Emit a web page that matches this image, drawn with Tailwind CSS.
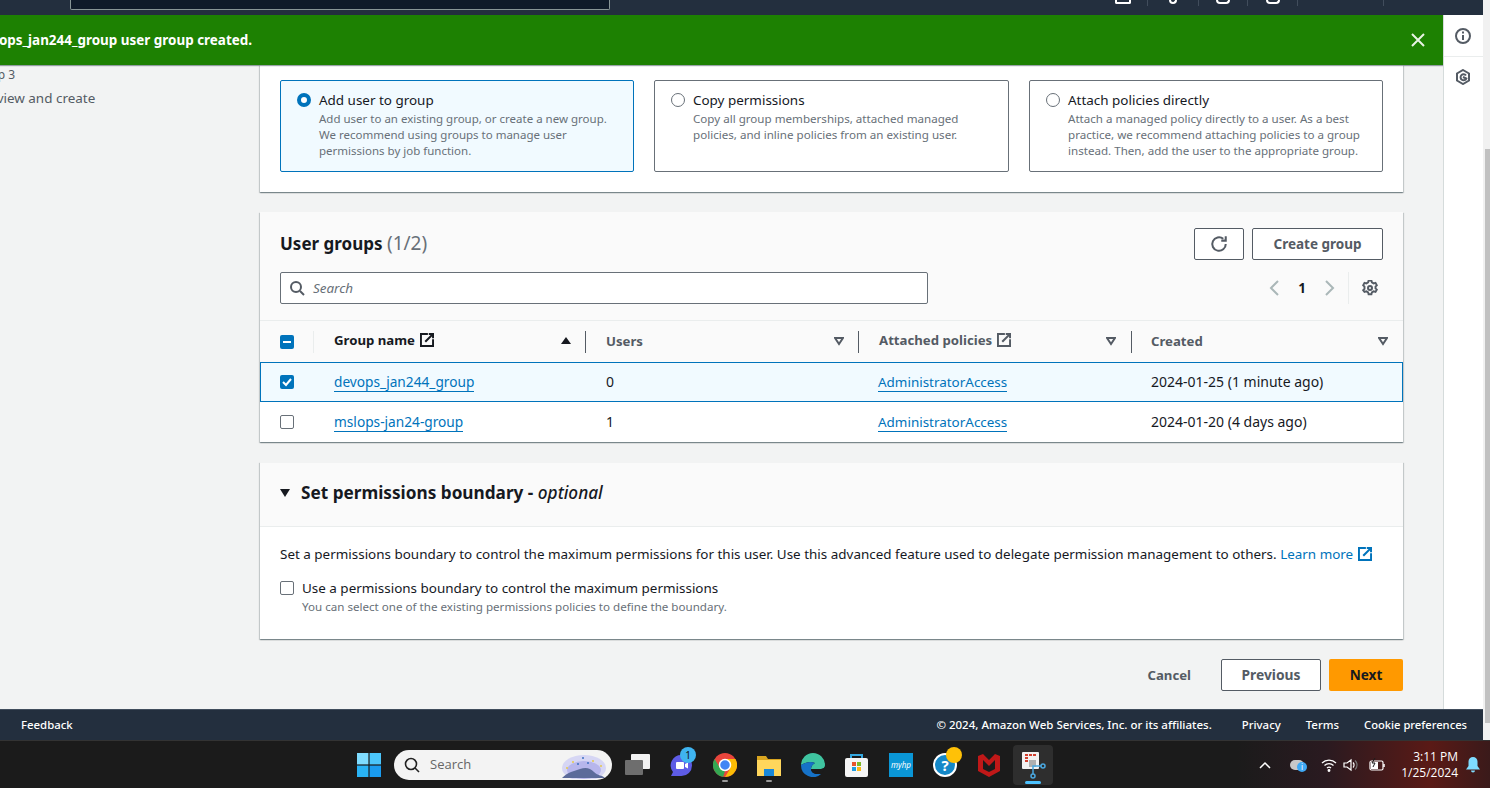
<!DOCTYPE html>
<html lang="en">
<head>
    <meta charset="UTF-8">
    <title>Add user to group</title>
    <script src="https://cdn.jsdelivr.net/npm/@tailwindcss/browser@4"></script>
</head>
<body class="font-['Noto_Sans',sans-serif] text-[13.45px] leading-5 text-[#16191f] bg-white overflow-hidden">
<div class="w-[1490px] h-[788px] flex flex-col overflow-hidden">
    <div class="flex h-[740px]">
        <div class="w-[1483px] flex flex-col">
            <!-- top nav, mostly scrolled off -->
            <div class="h-[15px] bg-[#232f3e] flex items-start shrink-0 overflow-hidden">
                <div class="ml-[70px] w-[540px] h-[10px] bg-[#0f1b2a] border border-t-0 border-[#879596] rounded-b-[2px] shrink-0"></div>
                <div class="ml-[503px] flex items-start">
                    <div class="w-[34px] h-[6px] pl-[2px]"><div class="w-4 h-[4px] border-2 border-t-0 border-white rounded-b-[2px]"></div></div>
                    <div class="w-[51px] h-[6px] border-l border-[#414d5c] flex justify-center"><div class="w-[8px] h-[4px] border-2 border-t-0 border-white rounded-b-full"></div></div>
                    <div class="w-[49px] h-[6px] border-l border-[#414d5c] flex justify-center"><div class="w-[14px] h-[4px] border-2 border-t-0 border-white rounded-b-full"></div></div>
                    <div class="w-[50px] h-[6px] border-l border-[#414d5c] flex justify-center"><div class="w-[14px] h-[4px] border-2 border-t-0 border-white rounded-b-[5px]"></div></div>
                    <div class="w-[86px] h-[6px] border-l border-[#414d5c]"></div>
                    <div class="w-[100px] h-[6px] border-l border-[#414d5c]"></div>
                </div>
            </div>

            <div class="flex h-[694px] shrink-0">
                <div class="w-[1443px] flex flex-col bg-[#f2f3f3] overflow-hidden">
                    <!-- flash message -->
                    <div class="h-[50px] shrink-0 bg-[#1d8102] flex items-center justify-between pr-[17px] shadow-[0_1px_1px_rgba(0,28,36,0.4)] relative z-10">
                        <span class="text-white font-bold -ml-[25px]">devops_jan244_group user group created.</span>
                        <svg class="w-4 h-4" viewBox="0 0 16 16" fill="none" stroke="#e8f3e4" stroke-width="2"><path d="M2 2l12 12M14 2L2 14"/></svg>
                    </div>

                    <div class="flex flex-1">
                        <!-- wizard steps, cut off at the left -->
                        <div class="w-[260px] shrink-0 text-[#545b64]">
                            <div class="text-[12px] leading-4 mt-[2px] -ml-[20px]">Step 3</div>
                            <div class="mt-[5px] -ml-[19px]">Review and create</div>
                        </div>

                        <div class="w-[1143px] shrink-0 flex flex-col">
                            <!-- permission options -->
                            <div class="bg-white h-[127px] shrink-0 shadow-[0_1px_1px_0_rgba(0,28,36,0.3),1px_1px_1px_0_rgba(0,28,36,0.15),-1px_1px_1px_0_rgba(0,28,36,0.15)] px-5 pt-[15px] grid grid-cols-[354px_355px_354px] gap-x-5 items-start">
                                <div class="h-[92px] bg-[#f1faff] border border-[#0073bb] rounded-[2px] pl-4 pt-[9px] flex">
                                    <div class="w-[14px] h-[14px] mt-[3px] rounded-full border-[4px] border-[#0073bb] bg-white shrink-0"></div>
                                    <div class="ml-2">
                                        <div>Add user to group</div>
                                        <div class="mt-[1px] text-[11.5px] leading-4 text-[#687078] w-[300px]">Add user to an existing group, or create a new group. We recommend using groups to manage user permissions by job function.</div>
                                    </div>
                                </div>
                                <div class="h-[92px] border border-[#687078] rounded-[2px] pl-4 pt-[9px] flex">
                                    <div class="w-[14px] h-[14px] mt-[3px] rounded-full border border-[#687078] bg-white shrink-0"></div>
                                    <div class="ml-2">
                                        <div>Copy permissions</div>
                                        <div class="mt-[1px] text-[11.6px] leading-4 text-[#687078] w-[290px]">Copy all group memberships, attached managed policies, and inline policies from an existing user.</div>
                                    </div>
                                </div>
                                <div class="h-[92px] border border-[#687078] rounded-[2px] pl-4 pt-[9px] flex">
                                    <div class="w-[14px] h-[14px] mt-[3px] rounded-full border border-[#687078] bg-white shrink-0"></div>
                                    <div class="ml-2">
                                        <div>Attach policies directly</div>
                                        <div class="mt-[1px] text-[11.6px] leading-4 text-[#687078] w-[300px]">Attach a managed policy directly to a user. As a best practice, we recommend attaching policies to a group instead. Then, add the user to the appropriate group.</div>
                                    </div>
                                </div>
                            </div>

                            <!-- user groups table -->
                            <div class="mt-5 h-[230px] shrink-0 bg-white shadow-[0_1px_1px_0_rgba(0,28,36,0.3),1px_1px_1px_0_rgba(0,28,36,0.15),-1px_1px_1px_0_rgba(0,28,36,0.15)]">
                                <div class="h-[108px] bg-[#fafafa] px-5 pt-4 relative">
                                    <div class="flex justify-between items-start h-[32px]">
                                        <div class="text-[17px] leading-[30px] font-bold">User groups <span class="font-normal text-[19px] text-[#687078]">(1/2)</span></div>
                                        <div class="flex gap-2">
                                            <button class="w-[50px] h-8 border border-[#545b64] rounded-[2px] bg-white flex items-center justify-center">
                                                <svg class="w-[18px] h-[18px]" viewBox="0 0 16 16" fill="none" stroke="#545b64" stroke-width="1.800"><path d="M14 8a6 6 0 1 1-2.200-4.600"/><path d="M14 1v4h-4"/></svg>
                                            </button>
                                            <button class="w-[131px] h-8 border border-[#545b64] rounded-[2px] bg-white text-[#545b64] text-[13.5px] font-bold">Create group</button>
                                        </div>
                                    </div>
                                    <div class="mt-3 flex justify-between items-center">
                                        <div class="w-[648px] h-8 border border-[#687078] rounded-[2px] bg-white flex items-center pl-2">
                                            <svg class="w-4 h-4" viewBox="0 0 16 16" fill="none" stroke="#545b64" stroke-width="2"><circle cx="7" cy="7" r="5"/><path d="M11 11l4 4"/></svg>
                                            <span class="ml-2 italic text-[#687078]">Search</span>
                                        </div>
                                        <div class="flex items-center h-8">
                                            <svg class="w-4 h-4" viewBox="0 0 16 16" fill="none" stroke="#aab7b8" stroke-width="2"><path d="M11 1L4 8l7 7"/></svg>
                                            <span class="ml-[15px] font-bold">1</span>
                                            <svg class="w-4 h-4 ml-[15px]" viewBox="0 0 16 16" fill="none" stroke="#aab7b8" stroke-width="2"><path d="M5 1l7 7-7 7"/></svg>
                                            <div class="w-px h-8 bg-[#eaeded] ml-[11px]"></div>
                                            <svg class="w-4 h-4 ml-[13px] mr-[5px]" viewBox="0 0 16 16" fill="none" stroke="#545b64" stroke-width="2"><path d="M6.500 1.200h3l.5 2 1.800 1 2-.6 1.400 2.600-1.400 1.400v1.800l1.400 1.400-1.400 2.400-2-.6-1.800 1-.5 2h-3l-.5-2-1.800-1-2 .6L.8 11.300l1.400-1.400V7.600L.8 6.200l1.400-2.600 2 .6 1.800-1z" transform="translate(0.4 -0.6) scale(0.95)"/><circle cx="8" cy="8" r="2"/></svg>
                                        </div>
                                    </div>
                                </div>
                                <div class="h-[42px] bg-[#fafafa] border-t border-[#eaeded] grid grid-cols-[53px_272px_273px_273px_272px] items-center font-bold text-[13.2px] text-[#545b64]">
                                    <div class="pl-5">
                                        <div class="w-[14px] h-[14px] rounded-[2px] bg-[#0073bb] flex items-center justify-center"><div class="w-2 h-[2px] bg-white"></div></div>
                                    </div>
                                    <div class="h-[22px] border-l border-[#eaeded] pl-5 pr-[14px] flex items-center justify-between text-[#16191f]">
                                        <span class="flex items-center gap-[5px] -mt-[4px]">Group name
                                            <svg class="w-[14px] h-[14px]" viewBox="0 0 16 16" fill="none" stroke="#16191f" stroke-width="2.400"><path d="M9 1H1v14h14V7"/><path d="M6 10l9-9M10 1h5v5"/></svg>
                                        </span>
                                        <svg class="w-[10px] h-[10px] -mt-[2px]" viewBox="0 0 10 10" fill="#16191f"><path d="M5 1l5 7H0z"/></svg>
                                    </div>
                                    <div class="h-[22px] border-l border-[#545b64] pl-5 pr-[14px] flex items-center justify-between">
                                        <span class="-mt-[2px]">Users</span>
                                        <svg class="w-[10px] h-[10px] -mt-[2px]" viewBox="0 0 10 10" fill="none" stroke="#545b64" stroke-width="2"><path d="M1 2h8L5 8z"/></svg>
                                    </div>
                                    <div class="h-[22px] border-l border-[#545b64] pl-5 pr-[15px] flex items-center justify-between">
                                        <span class="flex items-center gap-[5px] -mt-[4px]">Attached policies
                                            <svg class="w-[14px] h-[14px]" viewBox="0 0 16 16" fill="none" stroke="#545b64" stroke-width="2.400"><path d="M9 1H1v14h14V7"/><path d="M6 10l9-9M10 1h5v5"/></svg>
                                        </span>
                                        <svg class="w-[10px] h-[10px] -mt-[2px]" viewBox="0 0 10 10" fill="none" stroke="#545b64" stroke-width="2"><path d="M1 2h8L5 8z"/></svg>
                                    </div>
                                    <div class="h-[22px] border-l border-[#545b64] pl-[19px] pr-[15px] flex items-center justify-between">
                                        <span class="-mt-[2px]">Created</span>
                                        <svg class="w-[10px] h-[10px] -mt-[2px]" viewBox="0 0 10 10" fill="none" stroke="#545b64" stroke-width="2"><path d="M1 2h8L5 8z"/></svg>
                                    </div>
                                </div>
                                <div class="h-10 bg-[#f1faff] border border-[#0073bb] grid grid-cols-[52px_272px_273px_273px_271px] items-center">
                                    <div class="pl-[19px]">
                                        <div class="w-[14px] h-[14px] rounded-[2px] bg-[#0073bb] flex items-center justify-center">
                                            <svg class="w-[10px] h-[10px]" viewBox="0 0 10 10" fill="none" stroke="white" stroke-width="2"><path d="M1 5l3 3 5-6"/></svg>
                                        </div>
                                    </div>
                                    <div class="pl-[21px]"><a class="text-[#0073bb] text-[13.7px] border-b border-[#0073bb]">devops_jan244_group</a></div>
                                    <div class="pl-[21px] text-[14px]">0</div>
                                    <div class="pl-5"><a class="text-[#0073bb] border-b border-[#0073bb]">AdministratorAccess</a></div>
                                    <div class="pl-5 text-[14px]">2024-01-25 (1 minute ago)</div>
                                </div>
                                <div class="h-10 grid grid-cols-[53px_272px_273px_273px_272px] items-center">
                                    <div class="pl-5">
                                        <div class="w-[14px] h-[14px] rounded-[2px] border border-[#687078] bg-white"></div>
                                    </div>
                                    <div class="pl-[21px]"><a class="text-[#0073bb] text-[13.7px] border-b border-[#0073bb]">mslops-jan24-group</a></div>
                                    <div class="pl-[21px] text-[14px]">1</div>
                                    <div class="pl-5"><a class="text-[#0073bb] border-b border-[#0073bb]">AdministratorAccess</a></div>
                                    <div class="pl-5 text-[14px]">2024-01-20 (4 days ago)</div>
                                </div>
                            </div>

                            <!-- permissions boundary -->
                            <div class="mt-5 h-[177px] shrink-0 bg-white shadow-[0_1px_1px_0_rgba(0,28,36,0.3),1px_1px_1px_0_rgba(0,28,36,0.15),-1px_1px_1px_0_rgba(0,28,36,0.15)]">
                                <div class="h-[65px] bg-[#fafafa] border-y border-[#eaeded] border-t-[#f2f3f3] flex items-center pl-5 pb-[3px]">
                                    <svg class="w-[10px] h-[10px]" viewBox="0 0 10 10" fill="#16191f"><path d="M0 1h10L5 9z"/></svg>
                                    <span class="ml-[11px] text-[17.2px] font-bold">Set permissions boundary - <em class="font-medium italic">optional</em></span>
                                </div>
                                <div class="px-5 pt-[17px]">
                                    <div>Set a permissions boundary to control the maximum permissions for this user. Use this advanced feature used to delegate permission management to others. <a class="text-[#0073bb]">Learn more</a>
                                        <svg class="inline w-[14px] h-[14px] ml-[1px] align-[-2px]" viewBox="0 0 16 16" fill="none" stroke="#0073bb" stroke-width="2.400"><path d="M9 1H1v14h14V7"/><path d="M6 10l9-9M10 1h5v5"/></svg>
                                    </div>
                                    <div class="mt-[14px] flex">
                                        <div class="w-[14px] h-[14px] mt-[3px] rounded-[2px] border border-[#687078] shrink-0"></div>
                                        <div class="ml-2">
                                            <div>Use a permissions boundary to control the maximum permissions</div>
                                            <div class="mt-[1px] text-[11.6px] leading-4 text-[#687078]">You can select one of the existing permissions policies to define the boundary.</div>
                                        </div>
                                    </div>
                                </div>
                            </div>

                            <!-- wizard actions -->
                            <div class="mt-5 flex justify-end items-center font-bold">
                                <span class="text-[#545b64] text-[13.2px]">Cancel</span>
                                <button class="ml-[30px] w-[100px] h-8 border border-[#545b64] rounded-[2px] bg-white text-[#545b64] text-[13.8px] font-bold">Previous</button>
                                <button class="ml-2 w-[74px] h-8 rounded-[2px] bg-[#ff9900] text-[#16191f] text-[13.6px] font-bold">Next</button>
                            </div>
                        </div>
                    </div>
                </div>

                <!-- right tool rail -->
                <div class="w-10 shrink-0 bg-white border-l border-[#d5dbdb] flex flex-col items-center">
                    <div class="h-[42px] w-full border-b border-[#eaeded] flex items-center justify-center pr-[1px]">
                        <svg class="w-4 h-4" viewBox="0 0 16 16" fill="none" stroke="#545b64" stroke-width="2"><circle cx="8" cy="8" r="7"/><path d="M8 7v5M8 3.500v2"/></svg>
                    </div>
                    <svg class="w-4 h-4 mt-3 mr-[1px]" viewBox="0 0 16 16" fill="none" stroke="#545b64" stroke-width="2"><path d="M8 1l6 3.500v7L8 15l-6-3.500v-7z"/><path d="M11 6.500a3 3 0 1 0 .3 3L8 8"/></svg>
                </div>
            </div>

            <!-- console footer -->
            <div class="h-[31px] shrink-0 bg-[#232f3e] border-t border-[#414d5c] flex items-center text-white text-[11.4px] font-medium pl-[21px] pr-[16px]">
                <span>Feedback</span>
                <span class="ml-auto text-[11.5px]">© 2024, Amazon Web Services, Inc. or its affiliates.</span>
                <span class="ml-[30px]">Privacy</span>
                <span class="ml-[25px]">Terms</span>
                <span class="ml-[25px] text-[11.2px]">Cookie preferences</span>
            </div>
        </div>

        <!-- browser scrollbar -->
        <div class="w-[7px] shrink-0 bg-[#f1f1f1] pl-[2px] flex flex-col">
            <div class="h-[149px] shrink-0"></div>
            <div class="h-[574px] shrink-0 bg-[#c1c1c1]"></div>
        </div>
    </div>

    <!-- windows taskbar -->
    <div class="h-[48px] shrink-0 bg-[linear-gradient(90deg,#1b1b1b_0%,#1b1b1b_83%,#2a1a20_89%,#5a1a16_96%,#3a1a1a_100%)] border-t border-[#333] flex items-center text-white">
        <svg class="ml-[357px] w-[24px] h-[24px] shrink-0" viewBox="0 0 24 24"><path d="M0 0h11.400v11.400H0z" fill="#7fdcff"/><path d="M12.600 0H24v11.400H12.600z" fill="#4cc6fb"/><path d="M0 12.600h11.400V24H0z" fill="#29b3f5"/><path d="M12.600 12.600H24V24H12.600z" fill="#1a9cf0"/></svg>
        <div class="ml-[13px] w-[218px] h-[30px] rounded-full bg-[#f3f3f3] flex items-center pl-[10px] shrink-0 overflow-hidden relative">
            <svg class="w-[16px] h-[16px]" viewBox="0 0 16 16" fill="none" stroke="#222" stroke-width="1.600"><circle cx="7" cy="7" r="5.500"/><path d="M11 11l4 4"/></svg>
            <span class="ml-[10px] -mt-[2px] text-[13px] text-[#666] font-['Open_Sans',sans-serif]">Search</span>
            <svg class="absolute right-[5px] top-[3px] w-[46px] h-[26px]" viewBox="0 0 46 26"><ellipse cx="23" cy="15" rx="22" ry="13" fill="#d6d6f4"/><ellipse cx="23" cy="17" rx="17" ry="9" fill="#b7b6ec"/><path d="M1 25c6-6 12-7 18-9s10-1 14 3 8 3 11 6z" fill="#5c6b9a"/><circle cx="6" cy="15" r="1" fill="#e6c84a"/><circle cx="12" cy="9" r="1" fill="#e6c84a"/><circle cx="17" cy="11" r="1" fill="#3d6fc2"/><circle cx="22" cy="5" r="1" fill="#3d6fc2"/><circle cx="27" cy="10" r="1" fill="#3d6fc2"/><circle cx="32" cy="8" r="1" fill="#e6c84a"/><circle cx="40" cy="13" r="1" fill="#e6c84a"/></svg>
        </div>
        <svg class="ml-[13px] w-[25px] h-[21px] shrink-0" viewBox="0 0 25 21"><rect x="6" y="0" width="19" height="15" rx="1" fill="#f2f2f2"/><rect x="0" y="6" width="18" height="15" rx="1" fill="#6e6e6e"/></svg>
        <div class="ml-[20px] w-[23px] h-[24px] relative shrink-0">
            <svg class="w-[23px] h-[24px]" viewBox="0 0 23 24"><path d="M11.500 2a10.500 10.500 0 1 1 0 21H1l2-4A10.500 10.500 0 0 1 11.500 2z" fill="#5e5ce6"/><rect x="6" y="9" width="8" height="7" rx="1" fill="#fff"/><path d="M15 11l3-1.500v6L15 14z" fill="#fff"/></svg>
            <div class="absolute -top-[6px] left-[10px] w-4 h-4 rounded-full bg-[#3fb4f0] text-[10px] leading-4 text-center text-[#111]">1</div>
        </div>
        <div class="ml-[20px] w-6 h-6 relative shrink-0">
            <svg class="w-6 h-6" viewBox="0 0 24 24"><circle cx="12" cy="12" r="12" fill="#e8453c"/><path d="M12 24A12 12 0 0 1 1.600 6L7 15l5 3-2 6z" fill="#34a853"/><path d="M12 6h10.400A12 12 0 0 1 12 24l5-8z" fill="#fbbc05"/><circle cx="12" cy="12" r="5.500" fill="#4285f4" stroke="#fff" stroke-width="1.500"/></svg>
            <div class="absolute -bottom-[5px] left-[9px] w-[6px] h-[2px] rounded-full bg-[#9a9a9a]"></div>
        </div>
        <div class="ml-[20px] w-6 h-6 relative shrink-0">
            <svg class="w-6 h-6" viewBox="0 0 24 24"><path d="M0 3h9l2 3h13v4H0z" fill="#d9a520"/><path d="M0 7h24v16H0z" fill="#ffd65c"/><path d="M7 16h10v7H7z" fill="#1a88d8"/></svg>
            <div class="absolute -bottom-[5px] left-[9px] w-[6px] h-[2px] rounded-full bg-[#9a9a9a]"></div>
        </div>
        <svg class="ml-[20px] w-6 h-6 shrink-0" viewBox="0 0 24 24"><path d="M0 12A12 12 0 0 1 24 12c0 3-2 4-5 4H10c0-3 2-5 4-6-6-3-12 1-14 2z" fill="#3fc4a0"/><path d="M0 12c2-1 8-5 14-2-2 1-4 3-4 6 0 3 3 5 7 5h3a12 12 0 0 1-20-9z" fill="#1672c8"/><path d="M24 12c0 3-2 4-5 4h-9c0 3 3 5 7 5h3a12 12 0 0 0 4-9z" fill="#1b1b1b"/></svg>
        <svg class="ml-[20px] w-[23px] h-[24px] shrink-0" viewBox="0 0 23 24"><path d="M6 6V2h11v4" fill="none" stroke="#35a8e0" stroke-width="2"/><rect x="0" y="5" width="23" height="19" rx="2" fill="#f5f5f5"/><rect x="7" y="9" width="4" height="4" fill="#e8532b"/><rect x="12" y="9" width="4" height="4" fill="#7db928"/><rect x="7" y="14" width="4" height="4" fill="#1f9be0"/><rect x="12" y="14" width="4" height="4" fill="#fdb813"/></svg>
        <div class="ml-[21px] w-[24px] h-[24px] bg-[#0a96d6] flex items-center justify-center shrink-0 text-[8px] italic text-white">myhp</div>
        <div class="ml-[20px] w-6 h-6 relative shrink-0">
            <div class="w-6 h-6 rounded-full bg-[#1488c8] border-2 border-white text-center text-[15px] leading-5 font-bold text-white">?</div>
            <div class="absolute -top-[6px] left-[13px] w-4 h-4 rounded-full bg-[#ffc107]"></div>
        </div>
        <svg class="ml-[21px] w-[22px] h-[24px] shrink-0" viewBox="0 0 22 24"><path d="M0 3l5-2 6 6 6-6 5 2v15l-11 6L0 18z" fill="#c01818"/><path d="M5 7l6 6 6-6v9l-6 3-6-3z" fill="#1b1b1b"/></svg>
        <div class="ml-[13px] w-[40px] h-[40px] bg-[#2e2e2e] rounded-[4px] flex items-center justify-center relative shrink-0">
            <svg class="w-[26px] h-[28px]" viewBox="0 0 26 28"><rect x="2" y="1" width="17" height="17" rx="1" fill="#f2f2f2"/><path d="M5 3h3v2H5zM9 3h3v2H9zM13 3h3v2h-3zM5 6h3v2H5zM5 9h3v2H5z" fill="#d1402f"/><path d="M9 9h7v7H9z" fill="#b0b0b0"/><circle cx="13" cy="25" r="2" fill="none" stroke="#4aa8e0" stroke-width="1.500"/><circle cx="23" cy="15" r="2" fill="none" stroke="#4aa8e0" stroke-width="1.500"/><path d="M13 23v-8h8" fill="none" stroke="#4aa8e0" stroke-width="1.500"/></svg>
            <div class="absolute bottom-[1px] left-[12px] w-4 h-[3px] rounded-full bg-[#4cc2ff]"></div>
        </div>

        <svg class="ml-[206px] w-[12px] h-[8px] shrink-0" viewBox="0 0 12 8" fill="none" stroke="#fff" stroke-width="1.500"><path d="M1 7l5-5 5 5"/></svg>
        <div class="ml-[19px] w-[18px] h-[14px] relative shrink-0">
            <div class="absolute left-0 top-[2px] w-[14px] h-[10px] rounded-full bg-[#c8c8c8]"></div>
            <div class="absolute left-[7px] top-[4px] w-[10px] h-[10px] rounded-full bg-[#3fa9f5] text-[8px] leading-[10px] text-center">i</div>
        </div>
        <svg class="ml-[13px] w-[16px] h-[14px] shrink-0" viewBox="0 0 16 14" fill="none" stroke="#fff" stroke-width="1.300"><path d="M1 5a10 10 0 0 1 14 0M3.500 7.500a6.500 6.500 0 0 1 9 0M6 10a3 3 0 0 1 4 0"/><circle cx="8" cy="12.500" r="0.800" fill="#fff"/></svg>
        <svg class="ml-[6px] w-[16px] h-[14px] shrink-0" viewBox="0 0 16 14" fill="none" stroke="#fff" stroke-width="1.200"><path d="M1 5h3l4-3v10l-4-3H1z"/><path d="M10 4.500a3.500 3.500 0 0 1 0 5"/><path d="M12 2.500a6 6 0 0 1 0 9" stroke="#777"/></svg>
        <svg class="ml-[10px] w-[17px] h-[14px] shrink-0" viewBox="0 0 17 14"><rect x="1" y="3" width="13" height="9" rx="1.500" fill="none" stroke="#fff" stroke-width="1.200"/><path d="M15 6v3" stroke="#fff" stroke-width="1.500"/><path d="M2 4h7v7H2z" fill="#fff"/><path d="M6 0L3 5h3L4 9" stroke="#1b1b1b" fill="none"/></svg>
        <div class="ml-[13px] w-[59px] text-right text-[12px] leading-4 font-['Open_Sans',sans-serif] shrink-0">
            <div>3:11 PM</div>
            <div>1/25/2024</div>
        </div>
        <svg class="ml-[8px] w-[14px] h-[16px] shrink-0" viewBox="0 0 14 16" fill="#7fdcff"><path d="M7 0a4.500 4.500 0 0 1 4.500 4.500V9L14 12.500H0L2.500 9V4.500A4.500 4.500 0 0 1 7 0z"/><path d="M5 13.500h4a2 2 0 0 1-4 0z"/></svg>
    </div>
</div>
</body>
</html>
